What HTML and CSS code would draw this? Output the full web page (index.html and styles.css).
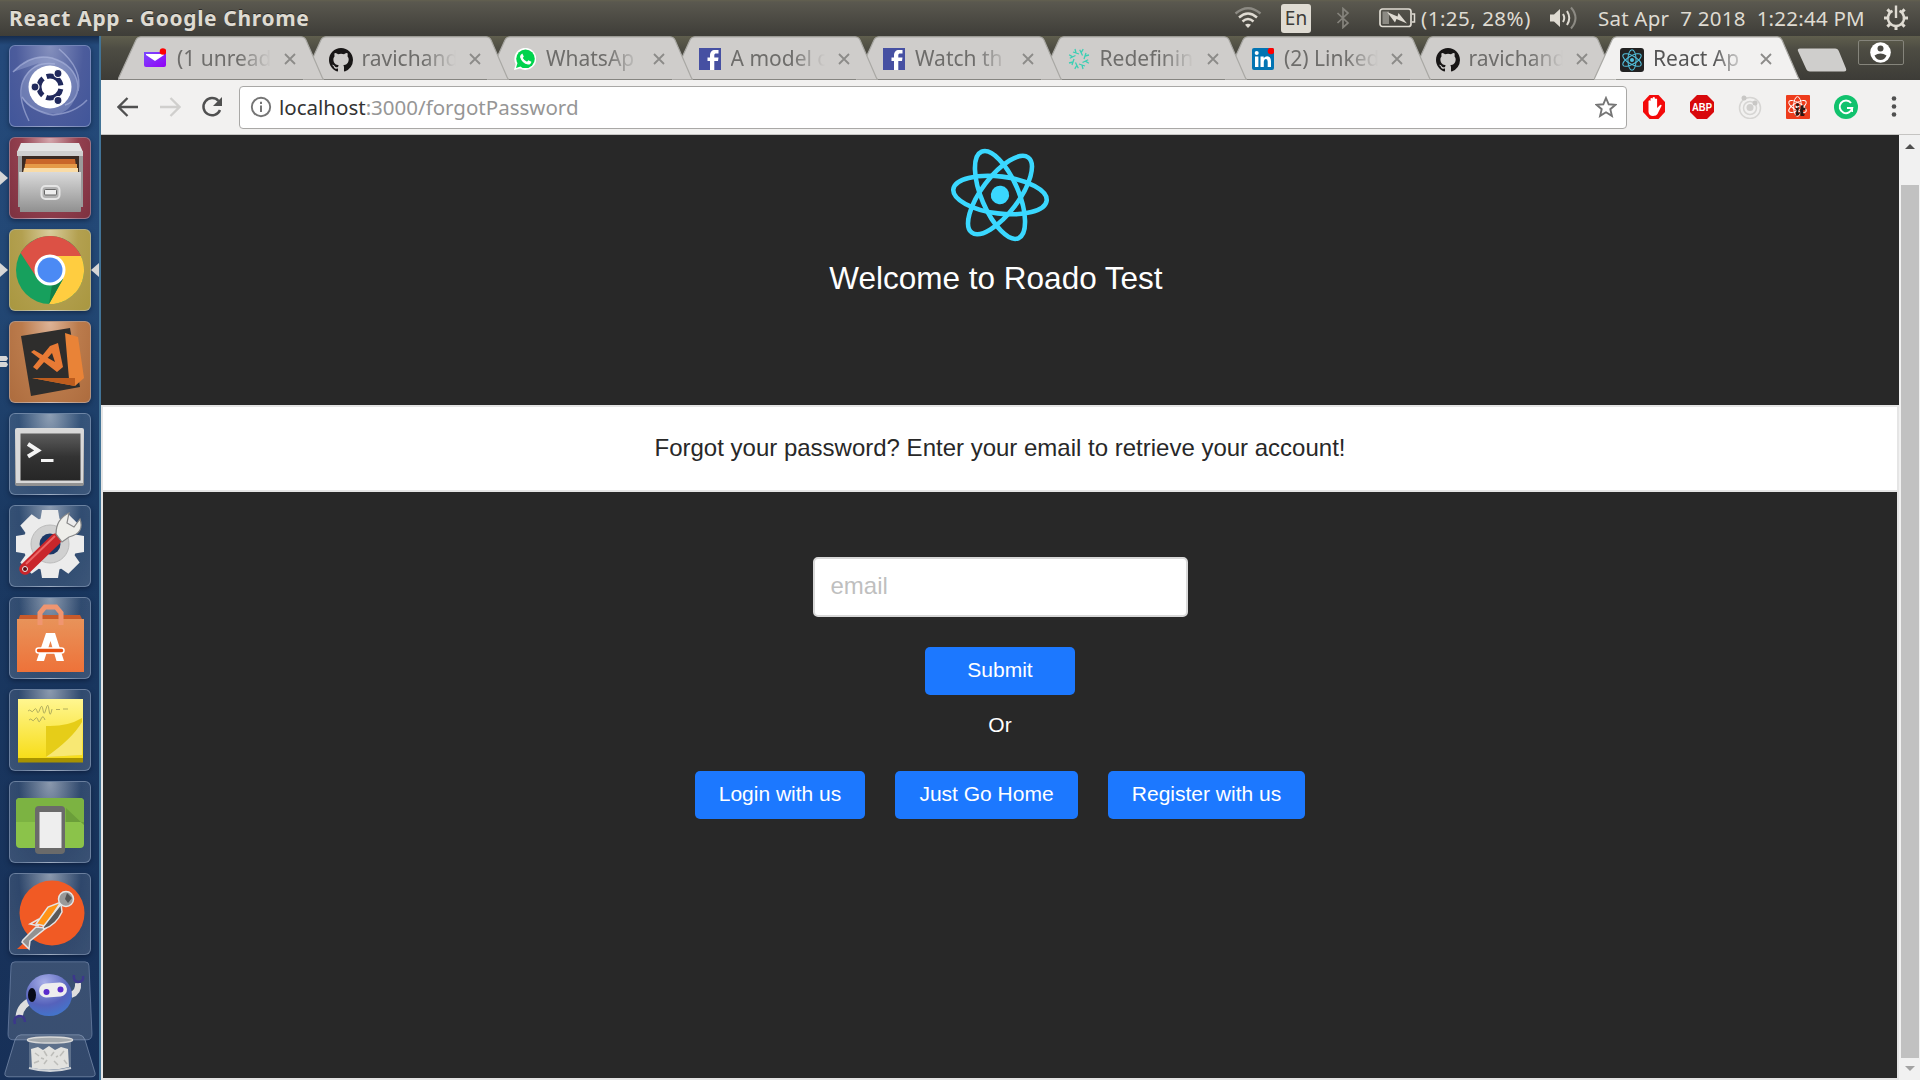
FILE: index.html
```html
<!DOCTYPE html>
<html lang="en">
<head>
<meta charset="utf-8">
<title>React App</title>
<link rel="stylesheet" href="styles.css">
</head>
<body>
<svg class="defs" width="0" height="0">
  <defs>
    <symbol id="tab" viewBox="0 0 206 44">
      <path d="M0 43.5 L18 4 Q19.500 .8 23 .8 H183 Q186.500 .8 188 4 L204 41 Q205 43.500 206 43.500 Z" fill="currentColor"/>
      <path d="M0 43.500 L18 4 Q19.500 .8 23 .8 H183 Q186.500 .8 188 4 L204 41 Q205 43.500 206 43.500" fill="none" stroke="#a9a8a4" stroke-width="1.200"/>
    </symbol>
    <symbol id="x" viewBox="0 0 12 12"><path d="M1 1 L11 11 M11 1 L1 11" stroke="currentColor" stroke-width="1.800"/></symbol>
    <symbol id="github" viewBox="0 0 16 16"><path fill="#181616" d="M8 0C3.580 0 0 3.580 0 8c0 3.540 2.290 6.530 5.470 7.590.4.070.550-.170.550-.380 0-.190-.010-.820-.010-1.490-2.010.370-2.530-.490-2.690-.940-.090-.230-.480-.940-.820-1.130-.280-.150-.680-.520-.010-.530.630-.010 1.080.580 1.230.820.720 1.210 1.870.870 2.330.660.070-.520.280-.870.510-1.070-1.780-.2-3.640-.890-3.640-3.950 0-.870.310-1.590.820-2.150-.080-.2-.360-1.020.080-2.120 0 0 .670-.210 2.200.820a7.600 7.600 0 0 1 4 0c1.530-1.040 2.200-.820 2.200-.820.440 1.100.160 1.920.080 2.120.510.560.820 1.270.820 2.150 0 3.070-1.870 3.750-3.650 3.950.290.250.540.730.540 1.480 0 1.070-.010 1.930-.010 2.200 0 .210.150.460.550.380A8 8 0 0 0 16 8c0-4.420-3.580-8-8-8z"/></symbol>
    <symbol id="facebook" viewBox="0 0 22 22"><rect width="22" height="22" fill="#4650a2"/><path d="M11 22v-9H8.500V9.500H11V7.500C11 4 12.800 2 16 2h3.500v3.500h-2.200c-1.400 0-2 .6-2 1.900v2.100h4.200L19 13h-3.700v9z" fill="#fff"/></symbol>
    <symbol id="atom" viewBox="-50 -50 100 100">
      <g fill="none" stroke="currentColor" stroke-width="4.600"><ellipse rx="47" ry="18.500"/><ellipse rx="47" ry="18.500" transform="rotate(60)"/><ellipse rx="47" ry="18.500" transform="rotate(120)"/></g><circle r="9.200" fill="currentColor"/>
    </symbol>
    <linearGradient id="metal" x2="0" y2="1"><stop stop-color="#dadada"/><stop offset="1" stop-color="#909090"/></linearGradient>
    <linearGradient id="orange" x2="0" y2="1"><stop stop-color="#e8935a"/><stop offset="1" stop-color="#ee7239"/></linearGradient>
    <linearGradient id="note" x2="0" y2="1"><stop stop-color="#fff690"/><stop offset="1" stop-color="#f7dd1a"/></linearGradient>
    <linearGradient id="dark" x2="0" y2="1"><stop stop-color="#5c5c5c"/><stop offset=".5" stop-color="#333"/><stop offset="1" stop-color="#262626"/></linearGradient>
    <linearGradient id="mail" x2="1" y2="1"><stop stop-color="#7a4bff"/><stop offset="1" stop-color="#9300f5"/></linearGradient>
    <radialGradient id="ball" cx=".4" cy=".2" r=".9"><stop stop-color="#a7aee8"/><stop offset=".6" stop-color="#5562bb"/><stop offset="1" stop-color="#3d7ad0"/></radialGradient>
  </defs>
</svg>

<header class="panel">
  <span class="panel-title">React App - Google Chrome</span>
  <div class="indicators">
    <svg class="i-wifi" width="28" height="24" viewBox="0 0 28 24" fill="none" stroke="#dfdbd2" stroke-width="2.400"><path d="M1.500 7.500 Q14 -3 26.500 7.500" stroke="#8c8a83"/><path d="M5 11.500 Q14 3.500 23 11.500"/><path d="M8.500 15.500 Q14 10.500 19.500 15.500"/><path d="M11 18.800 Q14 16.500 17 18.800 L14 22 Z" fill="#dfdbd2" stroke="none"/></svg>
    <span class="lang">En</span>
    <svg class="i-bt" width="14" height="22" viewBox="0 0 14 22" fill="none" stroke="#85837c" stroke-width="1.700"><path d="M1.500 6 L12 16 L7 20.500 V1.500 L12 6 L1.500 16"/></svg>
    <svg class="i-bat" width="37" height="20" viewBox="0 0 37 20"><rect x="1" y="1" width="31" height="17.500" rx="2.500" fill="none" stroke="#dfdbd2" stroke-width="1.700"/><path d="M33 6h2.500v8H33" fill="none" stroke="#dfdbd2" stroke-width="1.500"/><rect x="3.500" y="3.500" width="6.500" height="12.500" fill="#8c8a83"/><path d="M8 4 L18.500 8.500 L19.500 5 L28 15.500 L17.500 11 L16 14.500 Z" fill="#dfdbd2"/></svg>
    <span class="bat-text">(1:25, 28%)</span>
    <svg class="i-vol" width="30" height="26" viewBox="0 0 30 26" fill="none" stroke="#dfdbd2" stroke-width="2"><path d="M1 9.500h4L11 4v18L5 16.500H1z" fill="#dfdbd2" stroke="none"/><path d="M14 9 Q16.500 13 14 17"/><path d="M18 6 Q22.500 13 18 20"/><path d="M22 2.500 Q31 13 22 23.500" stroke="#8c8a83"/></svg>
    <span class="clock">Sat Apr&nbsp; 7 2018&nbsp; 1:22:44 PM</span>
    <svg class="i-gear" width="26" height="26" viewBox="-13 -13 26 26" fill="none" stroke="#dfdbd2"><path d="M-3.500 -7.200 A8 8 0 1 0 3.500 -7.200" stroke-width="2.500"/><path d="M0 -12.500 V0" stroke-width="2.400"/><path d="M8 0h4M-8 0h-4M0 8v4M5.800 5.800l2.800 2.800M-5.800 5.800l-2.800 2.800M6 -6l2.600 -2.600M-6 -6l-2.600 -2.600" stroke-width="3"/></svg>
  </div>
</header>

<div class="desktop">
  <nav class="launcher">
    <div class="tile t-dash"><svg viewBox="0 0 82 82"><g fill="none" stroke="#b7c0e6" stroke-width="1.500" opacity=".55"><path d="M4 27 Q22 8 43 13 Q66 20 69 40 Q69 56 56 60"/><path d="M50 4 Q74 24 69 46"/><path d="M20 76 Q6 48 16 32 Q26 16 46 19"/><path d="M13 52 Q22 66 44 70 Q66 68 78 55"/></g><path d="M4 27Q22 8 43 13Q66 20 69 40Q66 66 48 69Q20 68 13 52Q10 30 30 18Z" fill="#aebbe0" opacity=".35"/><circle cx="41" cy="42" r="21.500" fill="#fff"/><circle cx="41" cy="42" r="11" fill="none" stroke="#20295c" stroke-width="5" stroke-dasharray="19 4.040" stroke-dashoffset="-2"/><g fill="#20295c" stroke="#fff" stroke-width="1.200"><circle cx="26" cy="42" r="4"/><circle cx="49" cy="28.500" r="4"/><circle cx="49" cy="55.500" r="4"/></g></svg></div>
    <div class="tile t-files"><i class="pip"></i><svg viewBox="0 0 82 82"><path d="M9 14h65v56H9z" fill="#9b9b9b"/><path d="M12 6h58l4 9H8z" fill="#e4e4e4"/><path d="M8 14h66v5H8z" fill="#cfcfcf"/><path d="M13 19h57v20H13z" fill="#3a2a22"/><path d="M17 22h49l2 14H15z" fill="#c9662a"/><path d="M16 27h52v10H15z" fill="#e59a48"/><path d="M15 31h54v5H14z" fill="#f9dba6"/><path d="M10 35h62v39a1 1 0 0 1-1 1H11z" fill="url(#metal)"/><rect x="32.500" y="49" width="18" height="13" rx="4" fill="#b2b2b2" stroke="#e4e4e4" stroke-width="2"/><rect x="35.500" y="52.500" width="12" height="5.500" rx="1" fill="#eee" stroke="#666"/></svg></div>
    <div class="tile t-chrome"><i class="pip"></i><i class="pip right"></i><svg viewBox="-41 -41 82 82"><circle r="34" fill="#17a05d"/><path d="M-29.400 -17 A34 34 0 0 1 31 -14 H0 L-13 8 Z" fill="#dc5145"/><path d="M31 -14 A34 34 0 0 1 -1 34 L13 9 L7 -14 Z" fill="#ffcd40"/><path d="M-1 34 L13 9 L2 15Z" fill="#128048"/><circle r="15.500" fill="#fff"/><circle r="12.500" fill="#4b8af4"/></svg></div>
    <div class="tile t-code"><i class="pip high"></i><i class="pip low"></i><svg viewBox="0 0 82 82"><path d="M12 15 L61 7 L71 66 L22 75Z" fill="#2e2d2c"/><path d="M56 12 L69 16 L75 57 L66 65 L23 57 L60 58 Z" fill="#e98337"/><path d="M23 57h43v8z" fill="#bc5c1e"/><path d="M49 22 L54 46 L48 51 L22 31 L25 29 L46 41 L43 32 L28 49 L24 46 L41 25Z" fill="#e87a35"/></svg></div>
    <div class="tile t-glass"><svg viewBox="0 0 82 82"><rect x="6" y="15" width="69" height="58" rx="2" fill="url(#metal)"/><rect x="7" y="16" width="67" height="54" fill="#d9d9d9"/><rect x="11.500" y="20.500" width="60" height="47" fill="url(#dark)"/><path d="M19 31l10 6.500-10 6" fill="none" stroke="#f4f4f4" stroke-width="4"/><path d="M32 47.500h12.500" stroke="#f4f4f4" stroke-width="3"/></svg></div>
    <div class="tile t-glass"><svg viewBox="0 0 82 82"><g transform="translate(41 39)"><g fill="#ececec"><circle r="27"/><g id="teeth"><path d="M-8 -34h16l2 12h-20z"/><path d="M-8 34h16l2 -12h-20z"/><path d="M-34 -8v16l12 2v-20z"/><path d="M34 -8v16l-12 2v-20z"/></g><use href="#teeth" transform="rotate(45)"/></g><circle r="19" fill="#d0d0d0" stroke="#bbb"/><circle r="10.500" fill="#1c3766"/></g><path d="M16 64 L47 34" stroke="#c9262b" stroke-width="11.500" stroke-linecap="round"/><path d="M17 59 L46 31" stroke="#ec6464" stroke-width="2"/><circle cx="16" cy="64" r="2.500" fill="#5b1013" stroke="#eee"/><path d="M47 29 Q47 14 60 8 L58 18 L65 22 L71 14 Q76 28 60 32 L53 37Z" fill="#eeeeea" stroke="#888" stroke-width="1.200"/></svg></div>
    <div class="tile t-glass"><svg viewBox="0 0 82 82"><path d="M11 18h60l3 6H9z" fill="#c95a2a"/><path d="M8 22h67v53H8z" fill="url(#orange)"/><path d="M31 28V16l5-6h11l5 6v12" fill="none" stroke="#f09570" stroke-width="5"/><path d="M27.500 64 L37 36h9L55 64h-7.500L41.500 44 L35 64Z" fill="#fff"/><rect x="27" y="51" width="28" height="5" rx="2.500" fill="#e75214" stroke="#fff" stroke-width="1.500"/></svg></div>
    <div class="tile t-glass"><svg viewBox="0 0 82 82"><path d="M9 68h65v5.500H9z" fill="#a89300"/><path d="M9 10h65v59H9z" fill="url(#note)"/><path d="M37 68 V37 Q58 38 73 29 V66Z" fill="#e6cd18"/><path d="M37 68 Q63 50 73 33 V66 Z" fill="#f8e873"/><path d="M19 22q2-2 3 0t3-1 3 1 3-2 3 1 3-1 3 1 3-1m4 .5h4m3-.5h5M20 31q2-2 3 0t3-1 3 1 3-1 4 1" fill="none" stroke="#a9a65a" stroke-width=".9"/></svg></div>
    <div class="tile t-glass"><svg viewBox="0 0 82 82"><rect x="7" y="17" width="68" height="50" rx="4" fill="#8bc34a"/><path d="M7 41V21a4 4 0 0 1 4-4h60a4 4 0 0 1 4 4v20z" fill="#7cb342"/><path d="M57 27l18 17v-3H57z" fill="#6b9e3a"/><rect x="26" y="25" width="30" height="48" rx="4" fill="#6a6a6a"/><rect x="30.500" y="31" width="22" height="36" fill="#eee"/></svg></div>
    <div class="tile t-glass"><svg viewBox="0 0 82 82"><circle cx="43" cy="40" r="32.500" fill="#f15a24"/><path d="M8 76l10-9 2 9z" fill="#f15a24"/><g stroke="#e5e5e5" stroke-width="1.500"><path d="M14 67 L27 54 L37 55 L21 68 L20 76 L13 69Z" fill="#929292"/><path d="M27 51 L39 34 L52 29 L36 53Z" fill="#ff9416"/><path d="M34 54 L52 31 L53 39 Q47 52 35 56Z" fill="#595959"/><path d="M30 46L21 51L30 53" fill="none"/><circle cx="57" cy="26" r="7.500" fill="#999"/></g><path d="M58 20l5 5-4 5-3-4z" fill="#555"/></svg></div>
    <div class="fold"><svg viewBox="0 0 86 80"><path d="M8 .8h70q4 0 4 4l3 68q0 6-5 6H6q-5 0-5-6l3-68q0-4 4-4z" fill="#fff" fill-opacity=".15" stroke="#7f92b5" stroke-opacity=".6"/><path d="M12 56 Q13 43 28 38" fill="none" stroke="#dedede" stroke-width="7"/><path d="M64 34 Q72 31 71 22" fill="none" stroke="#dedede" stroke-width="6"/><path d="M8 63q-2-7 4-8 6 0 6 6M67 14q-1 6 4 7 6 0 5-6" fill="none" stroke="#3c378c" stroke-width="2.500"/><ellipse cx="42" cy="34" rx="23" ry="21" fill="url(#ball)"/><ellipse cx="25" cy="34" rx="4" ry="7" fill="#080a18"/><rect x="32" y="22" width="28" height="14" rx="7" fill="#eee" transform="rotate(-4 46 29)"/><circle cx="39.500" cy="31" r="3" fill="#5b2ccc"/><circle cx="53.500" cy="28.500" r="3" fill="#5b2ccc"/></svg></div>
    <div class="trash"><svg viewBox="0 0 92 44"><path d="M17 .8h58q4 0 6 5l10 33q1 4-4 4H5q-5 0-4-4l10-33q2-5 6-5z" fill="#fff" fill-opacity=".12" stroke="#8fa2c0" stroke-opacity=".6"/><path d="M25 7h42v27q-21 6-42 0z" fill="#5d708b"/><path d="M27 15l7-2 5 3 6-4 6 4 6-3 7 2 1 18q-18 5-37 1z" fill="#e2e2df"/><path d="M31 19l4 3M40 17l3 5M50 18l-3 4M60 17l-4 5M30 29l5-2M40 30l3-4M50 27l4 4M60 26l3 4M37 24l3 1M52 23l2-1" fill="none" stroke="#bdbdb9" stroke-width="1.500"/><ellipse cx="46" cy="6" rx="22.500" ry="3" fill="#a5aaae" stroke="#d8d8d8" stroke-width="1.500"/><path d="M25 34q21 6 42 0" fill="none" stroke="#cfd3d8" stroke-width="2"/></svg></div>
  </nav>

  <main class="browser">
    <div class="tabstrip">
      <div class="tab z8"><svg class="shape"><use href="#tab"/></svg><svg class="fav" viewBox="0 0 22 22"><path d="M0 4h22v13a2 2 0 0 1-2 2H2a2 2 0 0 1-2-2z" fill="url(#mail)"/><path d="M2 6h18v1l-9 6-9-6z" fill="#fff"/><circle cx="19" cy="3.500" r="3.300" fill="#f00"/></svg><span class="label">(1 unread</span><svg class="close"><use href="#x"/></svg></div>
      <div class="tab z7"><svg class="shape"><use href="#tab"/></svg><svg class="fav big"><use href="#github"/></svg><span class="label">ravichand</span><svg class="close"><use href="#x"/></svg></div>
      <div class="tab z6"><svg class="shape"><use href="#tab"/></svg><svg class="fav wide" viewBox="0 0 22 22"><path d="M0 22l1.600-6A11 11 0 1 1 6 20.500z" fill="#fff"/><circle cx="11.500" cy="10.800" r="9.300" fill="#00d34d"/><path d="M2 20l1.500-5 3 3.500z" fill="#00d34d"/><path d="M8.300 5.500l1.500 3-1 1.500q1.500 2.700 4.200 3.800l1.400-1.500 3 1.500q-.5 3-3.400 2.800-6-1.200-8-7.600 0-2.300 2.300-3.500z" fill="#fff"/></svg><span class="label">WhatsAp</span><svg class="close"><use href="#x"/></svg></div>
      <div class="tab z5"><svg class="shape"><use href="#tab"/></svg><svg class="fav wide"><use href="#facebook"/></svg><span class="label">A model o</span><svg class="close"><use href="#x"/></svg></div>
      <div class="tab z4"><svg class="shape"><use href="#tab"/></svg><svg class="fav wide"><use href="#facebook"/></svg><span class="label">Watch th</span><svg class="close"><use href="#x"/></svg></div>
      <div class="tab z3"><svg class="shape"><use href="#tab"/></svg><svg class="fav wide" viewBox="-11 -11 22 22" fill="none" stroke="#3ccfb4" stroke-width="1.300"><g id="spk"><path d="M5 0L7 -6M6 -3L10 -4"/><path d="M5 0L7 -6M6 -3L10 -4" transform="rotate(45)"/><path d="M5 0L7 -6M6 -3L10 -4" transform="rotate(90)"/><path d="M5 0L7 -6M6 -3L10 -4" transform="rotate(135)"/></g><use href="#spk" transform="rotate(180)"/></svg><span class="label">Redefinin</span><svg class="close"><use href="#x"/></svg></div>
      <div class="tab z2"><svg class="shape"><use href="#tab"/></svg><svg class="fav wide" viewBox="0 0 22 22"><rect width="22" height="22" rx="2" fill="#0274b3"/><path d="M3 8.500h3.400V19H3zM8.500 8.500h3.200v1.400q3-3 6 -.6 1.300 1.300 1.300 4V19h-3.300v-5.300q0-2.600-1.800-2.600-2.100 0-2.100 2.600V19H8.500z" fill="#fff"/><circle cx="4.700" cy="5" r="2" fill="#fff"/><circle cx="19" cy="3" r="3.300" fill="#f00"/></svg><span class="label">(2) Linked</span><svg class="close"><use href="#x"/></svg></div>
      <div class="tab z1"><svg class="shape"><use href="#tab"/></svg><svg class="fav big"><use href="#github"/></svg><span class="label">ravichand</span><svg class="close"><use href="#x"/></svg></div>
      <div class="tab active"><svg class="shape"><use href="#tab"/></svg><svg class="fav big" viewBox="0 0 24 24"><rect width="24" height="24" rx="3" fill="#222"/><use href="#atom" class="atom-fav" x="1" y="1" width="22" height="22" transform="rotate(90 12 12)"/></svg><span class="label">React Ap</span><svg class="close"><use href="#x"/></svg></div>
      <svg class="newtab" width="50" height="24" viewBox="0 0 50 24"><path d="M3 .5h35q3 0 4 3l7 17q1 3-2 3H13q-3 0-4-3L1 3Q0 .5 3 .5z" fill="#cfcecc"/></svg>
      <span class="user"><svg width="21" height="21" viewBox="0 0 21 21"><circle cx="10.500" cy="10.500" r="10.300" fill="#fff"/><circle cx="10.500" cy="6.500" r="3" fill="#4a4943"/><path d="M4.500 13.500q6-4 12 0-2 4.500-6 4.500t-6-4.500z" fill="#4a4943"/></svg></span>
    </div>

    <div class="toolbar">
      <svg class="nav" viewBox="0 0 22 22" fill="none" stroke="#505050" stroke-width="2.300"><path d="M21 11H2M10.500 2L1.500 11l9 9"/></svg>
      <svg class="nav" viewBox="0 0 22 22" fill="none" stroke="#d0cfcd" stroke-width="2.300"><path d="M1 11h19M11.500 2l9 9-9 9"/></svg>
      <svg class="nav" viewBox="0 0 22 22" fill="none" stroke="#505050" stroke-width="2.500"><path d="M17.500 5A8.600 8.600 0 1 0 19 14"/><path d="M21 1v9h-9z" fill="#505050" stroke="none"/></svg>
      <div class="omnibox">
        <svg width="22" height="22" viewBox="0 0 22 22"><circle cx="11" cy="11" r="9.200" fill="none" stroke="#757575" stroke-width="1.900"/><path d="M11 9.500V16M11 5.800v2.200" stroke="#757575" stroke-width="2"/></svg>
        <span class="url"><b>localhost</b>:3000/forgotPassword</span>
        <svg width="22" height="22" viewBox="0 0 22 22"><path d="M11 2l2.700 6.300 6.800.5-5.200 4.400 1.600 6.700L11 16.300l-5.900 3.600 1.600-6.700L1.500 8.800l6.800-.5z" fill="none" stroke="#757575" stroke-width="1.900"/></svg>
      </div>
      <div class="extensions">
        <svg width="24" height="24" viewBox="0 0 24 24"><path d="M7.500 0h9L23 7v10l-6.500 7h-9L1 17V7z" fill="#f40a0a"/><path d="M6.500 12V6q1-1.300 2 0v5V3.500q1.100-1.200 2.200 0V11V2.500q1.100-1.200 2.200 0V11V4q1.100-1.200 2.200 0v9l3-3q1.500-.6 1.500.8L15.500 19q-1 2-4.500 2-4 0-4.500-4z" fill="#fff"/></svg>
        <svg width="24" height="24" viewBox="0 0 24 24"><path d="M7 0h10l7 7v10l-7 7H7l-7-7V7z" fill="#d8090c"/><text x="12" y="16.300" text-anchor="middle" textLength="20" lengthAdjust="spacingAndGlyphs" class="abp">ABP</text></svg>
        <svg width="24" height="24" viewBox="0 0 24 24" fill="none" stroke="#d6d5d3" stroke-width="1.500"><circle cx="12" cy="13" r="10.500"/><circle cx="12" cy="13" r="6.500"/><circle cx="12" cy="12.500" r="3.500" fill="#d0cfcd" stroke="none"/><circle cx="6" cy="3" r="2.500" fill="#c8c7c5" stroke="none"/><circle cx="17" cy="8" r="2.500" fill="#c8c7c5" stroke="none"/></svg>
        <svg width="24" height="24" viewBox="0 0 24 24"><rect width="24" height="24" rx="1" fill="#ee3c1c"/><use href="#atom" class="atom-ext" x="1" y="1" width="21" height="21" transform="rotate(90 11.500 11.500)"/><path d="M9 13.500l4-1.500-1 6 2-1-1 3-3.500 1 1-6zM15 10.500l2.500-.5 0 3 2.500-.5-1 2.500-2 .3.500 4 1.500 0-1 1.700-3.500 0-.5-6z" fill="#2b1714"/><circle cx="11.500" cy="9.800" r="1.600" fill="#2b1714"/></svg>
        <svg width="24" height="24" viewBox="0 0 24 24"><circle cx="12" cy="12" r="12" fill="#11c26d"/><path d="M17 8a6.300 6.300 0 1 0 1.200 5H13" fill="none" stroke="#fff" stroke-width="2"/><path d="M18.200 17v-4" stroke="#fff" stroke-width="1.600"/></svg>
        <svg width="24" height="24" viewBox="0 0 24 24" fill="#505050"><circle cx="12" cy="3.500" r="2.300"/><circle cx="12" cy="11.500" r="2.300"/><circle cx="12" cy="19.500" r="2.300"/></svg>
      </div>
    </div>

    <div class="viewport">
      <div class="page">
        <section class="hero">
          <svg class="logo"><use href="#atom" transform="rotate(7 50 50)"/></svg>
          <h1>Welcome to Roado Test</h1>
        </section>
        <section class="band">Forgot your password? Enter your email to retrieve your account!</section>
        <section class="form">
          <input type="text" placeholder="email">
          <button class="submit">Submit</button>
          <p>Or</p>
          <div class="links">
            <button class="login">Login with us</button>
            <button class="home">Just Go Home</button>
            <button class="register">Register with us</button>
          </div>
        </section>
      </div>
      <div class="scrollbar">
        <svg width="10" height="5" viewBox="0 0 10 5"><path d="M0 5L5 0l5 5z" fill="#505050"/></svg>
        <i class="thumb"></i>
        <svg width="10" height="5" viewBox="0 0 10 5"><path d="M0 0h10L5 5z" fill="#a3a3a3"/></svg>
      </div>
    </div>
  </main>
</div>
</body>
</html>
```
FILE: styles.css
```css
* { box-sizing: border-box; }
body { margin: 0; width: 1920px; height: 1080px; overflow: hidden; display: flex; flex-direction: column; background: #282828; font-family: "Noto Sans", "Open Sans", sans-serif; font-stretch: 87.5%; }
svg { display: block; flex: none; }
.defs { position: absolute; }

/* top panel */
.panel { height: 36px; flex: none; display: flex; align-items: center; justify-content: space-between; padding: 0 11px 0 9px; background: linear-gradient(#63604f 0, #5a584f 2px, #3e3d38 100%); color: #dfdbd2; font-size: 20.500px; white-space: nowrap; }
.panel-title { font-weight: 700; font-size: 21px; letter-spacing: .65px; text-shadow: 0 -1px #2c2b28; }
.indicators { display: flex; align-items: center; }
.lang { width: 30px; height: 29px; margin: 0 25px 0 19px; border-radius: 3px; background: #dfdbd2; color: #3c3b37; font-size: 19px; line-height: 28px; text-align: center; }
.i-bt { margin-right: 29px; }
.bat-text { width: 110px; margin: 0 18px 0 5px; letter-spacing: .5px; }
.clock { width: 266px; margin: 0 19px 0 19px; letter-spacing: .22px; }

.desktop { flex: 1; display: flex; min-height: 0; }

/* launcher */
.launcher { width: 101px; flex: none; padding: 9px 0 0 9px; display: flex; flex-direction: column; gap: 10px; background: linear-gradient(#152c4e 0, #24497a 9px, #234875 250px, #1a3962 480px, #173058 100%); border-right: 2px solid #427396; }
.tile { position: relative; flex: none; width: 82px; height: 82px; border-radius: 6px; border: 1.500px solid rgba(190, 205, 230, .38); box-shadow: 0 2px 5px rgba(5, 15, 40, .5); }
.tile svg { width: 82px; height: 82px; margin: -1px; }
.t-dash { background: radial-gradient(ellipse at 50% 0, #8590bd, #4c5c9c 60%, #41569a); }
.t-files { background: radial-gradient(ellipse at 50% 0, #d4a6ac, #93404f 50%, #7d3140); }
.t-chrome { background: radial-gradient(ellipse at 50% 0, #d8cc9c, #b3a050 50%, #a99740); }
.t-code { background: radial-gradient(ellipse at 50% 0, #ddb397, #bb7b4c 50%, #ad6c3e); }
.t-glass { background: radial-gradient(ellipse at 50% 0, rgba(255, 255, 255, .5), rgba(255, 255, 255, .1) 55%, rgba(255, 255, 255, .15)); }
.pip { position: absolute; left: -10px; top: 33px; width: 8px; height: 14px; background: #d6d6d6; clip-path: polygon(0 0, 100% 50%, 0 100%); }
.pip.right { left: 81px; clip-path: polygon(100% 0, 0 50%, 100% 100%); }
.pip.high, .pip.low { height: 5px; clip-path: polygon(0 0, 80% 0, 100% 50%, 80% 100%, 0 100%); }
.pip.high { top: 34px; }
.pip.low { top: 40px; }
.fold { width: 86px; height: 80px; margin: -4px 0 0 -2px; }
.fold svg { width: 86px; height: 80px; }
.trash { width: 92px; height: 44px; margin: -17px 0 0 -5px; }
.trash svg { width: 92px; height: 44px; }

/* browser chrome */
.browser { flex: 1; min-width: 0; display: flex; flex-direction: column; }
.tabstrip { height: 44px; flex: none; display: flex; padding-left: 17px; background: linear-gradient(#5f5e4d, #4d4c43 30%, #3d3c37); }
.tab { position: relative; flex: none; width: 206px; height: 44px; margin-right: -21.500px; padding: 12px 0 0 26px; display: flex; align-items: flex-start; color: #cfcdcb; }
.tab.active { color: #f2f1f0; z-index: 9; }
.z8 { z-index: 8; } .z7 { z-index: 7; } .z6 { z-index: 6; } .z5 { z-index: 5; }
.z4 { z-index: 4; } .z3 { z-index: 3; } .z2 { z-index: 2; } .z1 { z-index: 1; }
.shape { position: absolute; left: 0; top: 0; width: 206px; height: 44px; }
.fav { position: relative; width: 22px; height: 22px; }
.fav.wide { margin: 0 -1px 0 1px; }
.fav.big { width: 24px; height: 24px; margin-right: -2px; }
.atom-fav { color: #53c1de; }
.atom-ext { color: #fff; }
.label { position: relative; width: 94px; height: 28px; margin: -4px 0 0 11px; overflow: hidden; font-size: 21px; line-height: 28px; white-space: nowrap; color: #6e6d6b; -webkit-mask-image: linear-gradient(90deg, #000 65%, transparent 100%); mask-image: linear-gradient(90deg, #000 65%, transparent 100%); }
.active .label { color: #555; }
.close { position: relative; width: 12px; height: 12px; margin: 5px 0 0 13px; color: #8c8b89; }
.newtab { margin: 12px 0 0 18px; z-index: 10; }
.user { width: 46px; height: 25px; margin: 4px 0 0 11px; border: 1px solid #85847b; border-radius: 2px; display: flex; align-items: center; justify-content: center; }

.toolbar { height: 55px; flex: none; display: flex; align-items: center; padding: 0 14px 0 16px; background: #f2f1f0; border-bottom: 1px solid #c5c4c2; }
.nav { width: 22px; height: 22px; margin-right: 20px; }
.omnibox { width: 1388px; height: 43px; margin-left: -4px; padding: 0 9px 0 10px; display: flex; align-items: center; border: 1px solid #a9a8a6; border-radius: 4px; background: #fff; }
.url { flex: 1; margin-left: 7px; font-size: 20.500px; color: #969696; }
.url b { font-weight: 400; color: #333; }
.extensions { margin-left: 15px; display: flex; gap: 24px; }
.abp { font: 700 10px "Liberation Sans", sans-serif; fill: #fff; }

/* page */
.viewport { flex: 1; min-height: 0; display: flex; font-family: "Liberation Sans", Arial, sans-serif; font-stretch: normal; }
.page { flex: 1; display: flex; flex-direction: column; background: #282828; color: #fff; }
.hero { height: 270px; flex: none; display: flex; flex-direction: column; align-items: center; padding-top: 10px; }
.logo { width: 100px; height: 100px; color: #3ad8ff; }
h1 { margin: 15px 8px 0 0; font-size: 31.500px; line-height: 36px; font-weight: 400; }
.band { height: 87px; flex: none; border: 2px solid #e5e5e5; background: #fff; color: #282828; font-size: 24px; line-height: 81px; text-align: center; }
.form { flex: 1; display: flex; flex-direction: column; align-items: center; padding-top: 65px; border: 2px solid #e5e5e5; border-top: 0; }
input { width: 375px; height: 60px; padding: 0 16px 2px; border: 2px solid #d9d9d9; border-radius: 5px; font: 24px "Liberation Sans", sans-serif; background: #fff; }
input::placeholder { color: #bfbfbf; opacity: 1; }
button { height: 48px; padding: 0 0 3px; border: 0; border-radius: 5px; background: #1c78ff; color: #fff; font: 21px "Liberation Sans", sans-serif; }
.submit { width: 150px; margin-top: 30px; }
p { margin: 18px 0 0; font-size: 21px; line-height: 24px; }
.links { display: flex; gap: 30px; margin-top: 34px; }
.login { width: 170px; } .home { width: 183px; } .register { width: 197px; }
.scrollbar { width: 21px; background: #f1f1f1; display: flex; flex-direction: column; align-items: center; padding: 9px 0; }
.thumb { width: 18px; height: 873px; margin: 36px 0 8px; background: #c1c1c1; }
```
